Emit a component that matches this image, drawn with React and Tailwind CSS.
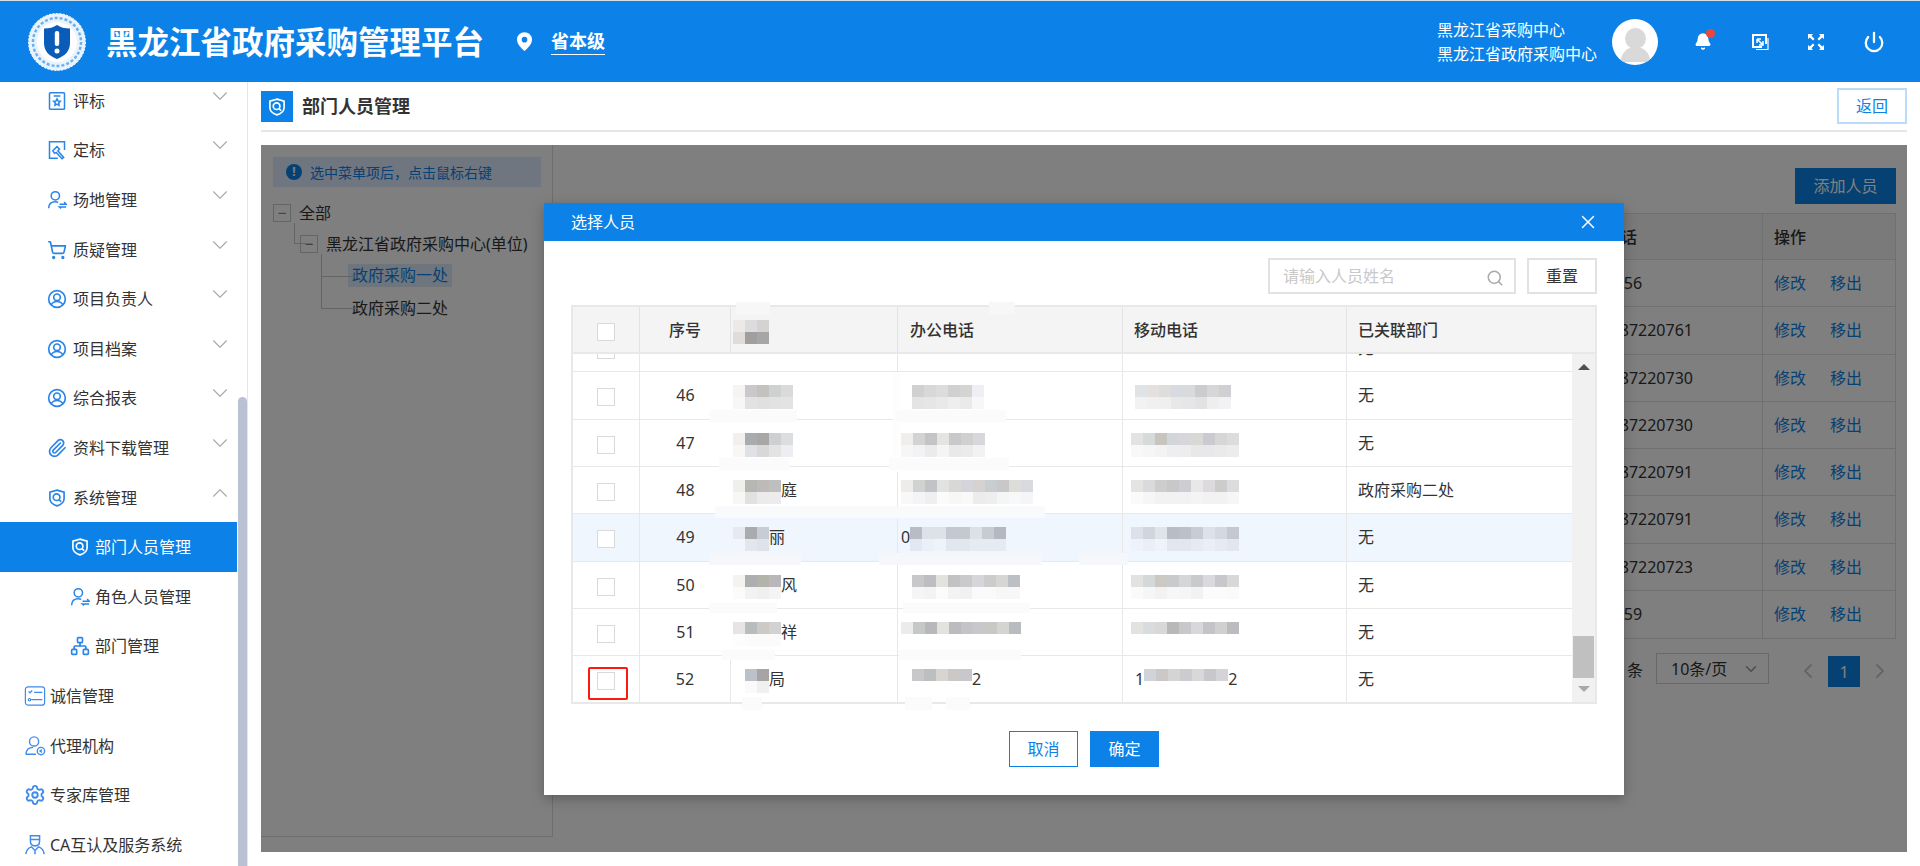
import {
  Bell,
  ChevronDown,
  ChevronLeft,
  ChevronRight,
  ChevronUp,
  Network,
  Paperclip,
  Power,
  Search,
  Settings,
  ShoppingCart,
  X,
} from "lucide-react";

const ShieldSearch = ({ className }) => (
  <svg viewBox="0 0 24 24" fill="none" stroke="currentColor" strokeWidth="2" className={className}>
    <path d="M12 2.500 20.500 5v8c0 4.200-3.600 7-8.500 8.500C7.100 20 3.500 17.200 3.500 13V5z" />
    <circle cx="11.500" cy="11" r="4" />
    <path d="m14.500 14 2.500 2.500" />
  </svg>
);

const UserSwap = ({ className }) => (
  <svg viewBox="0 0 24 24" fill="none" stroke="currentColor" strokeWidth="1.800" className={className}>
    <circle cx="10" cy="7" r="5" />
    <path d="M2 22c0-5 3-8 8-8 1.500 0 2.500.3 3.500.8" />
    <path d="M15 17h8l-2.500-2.500M23 20.500h-8l2 1.500" />
  </svg>
);

const UserCircle = ({ className }) => (
  <svg viewBox="0 0 24 24" fill="none" stroke="currentColor" strokeWidth="2" className={className}>
    <circle cx="12" cy="12" r="10" />
    <circle cx="12" cy="10" r="4" />
    <path d="M5 19c1.500-3 4-4 7-4s5.500 1 7 4" />
  </svg>
);

const StarDoc = ({ className }) => (
  <svg viewBox="0 0 24 24" fill="none" stroke="currentColor" strokeWidth="1.800" className={className}>
    <rect x="3" y="2" width="18" height="20" rx="1" />
    <path d="M8 6h8" />
    <path d="m12 9.500 1.300 2.600 2.700.3-2 2 .5 2.800-2.500-1.400-2.500 1.400.5-2.800-2-2 2.700-.3z" />
  </svg>
);

const PenDoc = ({ className }) => (
  <svg viewBox="0 0 24 24" fill="none" stroke="currentColor" strokeWidth="1.800" className={className}>
    <path d="M21 12V2H3v20h10" />
    <path d="m7 13 5-5 3 3-2 2 7 8-2 1.500-7-7.500-2 1z" />
  </svg>
);

const CheckList = ({ className }) => (
  <svg viewBox="0 0 24 24" fill="none" stroke="currentColor" strokeWidth="1.300" className={className}>
    <rect x="1.500" y="2" width="21" height="20" rx="3" />
    <path d="M5 7l1.500 1.500L9 6M11 8h9M8 16h12" />
    <circle cx="6" cy="16" r="1.300" />
  </svg>
);

const Agent = ({ className }) => (
  <svg viewBox="0 0 24 24" fill="none" stroke="currentColor" strokeWidth="1.500" className={className}>
    <circle cx="11" cy="7" r="5" />
    <path d="M2 21c.5-5 3.500-7.500 8-7.500M2 21h11" />
    <circle cx="18.500" cy="17.500" r="4" />
    <path d="m19.500 16-2 1.500 2 1.500" />
  </svg>
);

const Officer = ({ className }) => (
  <svg viewBox="0 0 24 24" fill="none" stroke="currentColor" strokeWidth="1.600" className={className}>
    <path d="M7 2h10v6c0 3-2 5-5 5s-5-2-5-5zM7 6h10" />
    <path d="M2 22c.5-5 3-7 6-8l4 4 4-4c3 1 5.500 3 6 8M12 18v4" />
  </svg>
);

const Logo = () => (
  <svg viewBox="0 0 60 60" className="w-[60px] h-[60px]">
    <circle cx="30" cy="30" r="28.500" fill="#e9f3fd" stroke="#fff" strokeWidth="1" strokeDasharray="2 1.500" />
    <circle cx="30" cy="30" r="24" fill="none" stroke="#6cb1ef" strokeWidth="2.500" strokeDasharray="3 2" />
    <circle cx="30" cy="30" r="20" fill="#fff" />
    <path d="M30 13c3.500 2.500 7.500 3.500 13 3.500V31c0 8-5 13-13 16-8-3-13-8-13-16V16.500c5.500 0 9.500-1 13-3.500z" fill="#0b5cb8" />
    <rect x="27.800" y="19" width="4.400" height="15" rx="2" fill="#fff" />
    <circle cx="30" cy="39" r="2.500" fill="#fff" />
  </svg>
);

const menu = [
  { label: "评标", icon: StarDoc, level: 2 },
  { label: "定标", icon: PenDoc, level: 2 },
  { label: "场地管理", icon: UserSwap, level: 2 },
  { label: "质疑管理", icon: ShoppingCart, level: 2 },
  { label: "项目负责人", icon: UserCircle, level: 2 },
  { label: "项目档案", icon: UserCircle, level: 2 },
  { label: "综合报表", icon: UserCircle, level: 2 },
  { label: "资料下载管理", icon: Paperclip, level: 2 },
  { label: "系统管理", icon: ShieldSearch, level: 2, open: true },
  { label: "部门人员管理", icon: ShieldSearch, level: 3, active: true },
  { label: "角色人员管理", icon: UserSwap, level: 3 },
  { label: "部门管理", icon: Network, level: 3 },
  { label: "诚信管理", icon: CheckList, level: 1 },
  { label: "代理机构", icon: Agent, level: 1 },
  { label: "专家库管理", icon: Settings, level: 1 },
  { label: "CA互认及服务系统", icon: Officer, level: 1 },
];

const MenuItem = ({ item }) => {
  const Icon = item.icon;
  const base = "h-[49.6px] flex items-center shrink-0";
  if (item.level === 1) {
    return (
      <div className={`${base} pl-[24px] text-[#333]`}>
        <Icon className="w-[22px] h-[22px] text-[#3f8bea] mr-[4px]" />
        <span>{item.label}</span>
      </div>
    );
  }
  if (item.level === 3) {
    return (
      <div className={`${base} pl-[70px] ${item.active ? "bg-[#0c82e8] text-white" : "text-[#333]"}`}>
        <Icon className={`w-[20px] h-[20px] mr-[5px] ${item.active ? "text-white" : "text-[#2a85e8]"}`} />
        <span>{item.label}</span>
      </div>
    );
  }
  const Arrow = item.open ? ChevronUp : ChevronDown;
  return (
    <div className={`${base} pl-[47px] pr-[4px] text-[#333]`}>
      <Icon className="w-[20px] h-[20px] text-[#2a85e8] mr-[6px]" />
      <span className="flex-1">{item.label}</span>
      <Arrow className="w-[26px] h-[26px] text-[#aaa] mb-[10px]" strokeWidth={1} />
    </div>
  );
};

const Sidebar = () => (
  <aside className="w-[248px] shrink-0 border-r border-[#e6e6e6] flex overflow-hidden">
    <div className="w-[237px] -mt-[6px] flex flex-col">
      {menu.map((item) => (
        <MenuItem key={item.label} item={item} />
      ))}
    </div>
    <div className="w-[9px] ml-[1px] mt-[315px] bg-[#b8c2d3] rounded-t-[5px]" />
  </aside>
);

// pixelated patches that hide the names and phone numbers
const Mosaic = ({ top, bottom, before, after, pl = 0 }) => (
  <div className="flex items-center h-full" style={{ paddingLeft: pl }}>
    {before && <span>{before}</span>}
    <div className="flex flex-col mt-[4px]">
      {[top, bottom].map((line, i) => (
        <div key={i} className="flex h-[12px]">
          {line.split(" ").map((c, j) => (
            <span key={j} className="w-[12px] h-[12px]" style={{ backgroundColor: `#${c}` }} />
          ))}
        </div>
      ))}
    </div>
    {after && <span>{after}</span>}
  </div>
);

const rows = [
  { n: 45, dept: "无" },
  {
    n: 46,
    dept: "无",
    name: { pl: 2, top: "f5f4f2 c9c8cb c4c2bf cfd0d2 dadadb", bottom: "f7f7f7 e2e2e2 e0e0e1 e2e2e2 e2e3e4" },
    office: { pl: 14, top: "d0d0d0 d8d8d8 dcdcdc d0d0d0 d4d4d2 eeeef4", bottom: "e4e4e4 e6e6e6 e9e9e9 eeeeee eaeaea f7f7f9" },
    mobile: { pl: 12, top: "e0e3e5 e4e0de dddddb d7dbdf d8dadb ccccce d6d6d6 cfcfd4", bottom: "f2f2f2 f0f0f0 efefef e8e8e8 e6e6e8 e2e2e4 eeeeee f2f2f4" },
  },
  {
    n: 47,
    dept: "无",
    name: { pl: 2, top: "f3efec a9acaf a8a7a5 cdd0d2 dcdddf", bottom: "f8f7f6 e0e1e4 d9d8d8 e3e3e4 eceef2" },
    office: { pl: 3, top: "f0eeec d2d3d2 c4c4c8 e6e4e0 c8c8cc d0d0d0 d8d8dc", bottom: "f6f6f6 f2f2f4 ebebeb f5f5f5 e9e9ea ebebeb f2f2f4" },
    mobile: { pl: 8, top: "e3e3e3 d7dadb c8c5c1 d2d6d8 d8d6da d8d8d4 cacad0 d6d6d6 dcdcdc", bottom: "f8f8f8 f6f6f6 f3f3f3 eeeef0 ecedee e8e8e8 e8e8ea eaeaea ececec" },
  },
  {
    n: 48,
    dept: "政府采购二处",
    name: { pl: 2, top: "efefec b5b7b4 bdbab7 bec0c0", bottom: "f7f7f6 e1e1e1 ebebeb ececec", after: "庭" },
    office: { pl: 3, top: "eeecea d0d2d0 c2c3c7 e2e2e0 d8d8d6 d4d4da d6d2d0 c8ced0 c8c8c8 dcdcd8 d8dae0", bottom: "f8f8f8 f4f4f6 efefef fbfbfb f7f7f5 f9f9f9 ececec eeeeee f4f5f5 f8f8f8 f5f5f8" },
    mobile: { pl: 8, top: "e4e4e2 d8dadb cdcdcd c8c8c8 ccced4 e8e8e8 dcdadc ccccca dadcde", bottom: "fafafa f6f6f6 f2f2f2 f2f2f2 f2f2f4 f4f4f4 f2f2f2 f2f2f2 f6f6f6" },
  },
  {
    n: 49,
    dept: "无",
    hover: true,
    name: { pl: 2, top: "e6e9f0 a9abae c8ccd4", bottom: "f2f5fb e2e6ee dfe2ea", after: "丽" },
    office: { pl: 3, before: "0", top: "b8bcc4 dde1e8 dde1e8 c4c8d0 c4c8d0 dde0e6 c8ccd2 b4b8c0", bottom: "e2e8f2 eaeff8 eef2fa e2e6ee e2e6ee e6eaf2 e6eaf2 e6eaf2" },
    mobile: { pl: 8, top: "dde1ea d0d5de dfe3ea b8bcc4 bcc0c8 c8ccd4 dde1ea d4d8e0 c4c8d0", bottom: "eef2fa eaeef6 eef2fa e2e6ee e2e6ee e6eaf2 eaeef6 e6eaf2 e2e6ee" },
  },
  {
    n: 50,
    dept: "无",
    name: { pl: 2, top: "f5f3f0 acaeb0 b2b3aa bab6ba", bottom: "fbfbfb f2f2f2 efefee f4f4f4", after: "风" },
    office: { pl: 14, top: "c8c8ca bcbec2 e2e2de c2c2c4 cacacc d6d6da cccccc d6d6d4 bcc0c4", bottom: "f5f5f5 f3f3f3 fbfbfb f3f3f3 f1f1f1 fafafa fafafa f7f7f7 f7f7f7" },
    mobile: { pl: 8, top: "e2e2e0 d4d8d8 ccc8c4 c8cacc d4d6d8 c8cacc dadade c8c8cc d8d8d8", bottom: "fafafa f6f6f6 f2f2f2 f7f7f7 f6f6f6 f2f2f2 fbfbfb fbfbfb fafafa" },
  },
  {
    n: 51,
    dept: "无",
    name: { pl: 2, top: "e6e4e4 b8bcbc ccc9c6 d2d2d2", bottom: "fdfdfd fbfbfb fbfbfb fbfbfb", after: "祥" },
    office: { pl: 3, top: "ebebeb c6c8c8 b6b8ba e2e2de bcbcbe c4c4c6 c8c8cc c8c8c4 d4d4d0 b8bcc0", bottom: "ffffff ffffff ffffff ffffff ffffff ffffff ffffff ffffff ffffff ffffff" },
    mobile: { pl: 8, top: "e2e2de d8dcdc d8d8d8 b8b8b8 c8c8cc d8d8dc c4c4c8 d0d0d0 bcbcc0", bottom: "ffffff ffffff ffffff ffffff ffffff ffffff ffffff ffffff ffffff" },
  },
  {
    n: 52,
    dept: "无",
    border: true,
    name: { pl: 14, top: "bcc0c8 a6a4a4", bottom: "fafafa f0f0f0", after: "局" },
    office: { pl: 14, top: "c8c8ca bcbec0 d8d4d0 ccc8c8 c8c8cc", bottom: "ffffff ffffff ffffff ffffff ffffff", after: "2" },
    mobile: { pl: 12, before: "1", top: "d0d4d8 ccc8c8 d4d4d4 ccccd0 d8d8d8 c8c8cc d4d4d8", bottom: "ffffff ffffff ffffff ffffff ffffff ffffff ffffff", after: "2" },
  },
];

// faint white smears left by the redaction, they break the grid lines
const smears = [
  "left-[192px] top-[99px] w-[34px] h-[12px] bg-[#f7f7f7]",
  "left-[445px] top-[99px] w-[26px] h-[12px] bg-[#f7f7f7]",
  "left-[349px] top-[169px] w-[7px] h-[100px] bg-[#fdfdfd]",
  "left-[166px] top-[207px] w-[87px] h-[12px] bg-[#fbfbfb]",
  "left-[352px] top-[207px] w-[110px] h-[12px] bg-[#fbfbfb]",
  "left-[175px] top-[255px] w-[71px] h-[12px] bg-[#fbfbfb]",
  "left-[345px] top-[255px] w-[120px] h-[12px] bg-[#fbfbfb]",
  "left-[171px] top-[303px] w-[330px] h-[12px] bg-[#f9fafc]",
  "left-[165px] top-[350px] w-[92px] h-[12px] bg-[#f6f7fb]",
  "left-[335px] top-[350px] w-[163px] h-[12px] bg-[#f6f7fb]",
  "left-[535px] top-[350px] w-[49px] h-[12px] bg-[#f6f7fb]",
  "left-[165px] top-[400px] w-[68px] h-[10px] bg-[#fbfbfb]",
  "left-[359px] top-[400px] w-[127px] h-[10px] bg-[#fbfbfb]",
  "left-[178px] top-[447px] w-[53px] h-[10px] bg-[#fbfbfb]",
  "left-[355px] top-[447px] w-[122px] h-[10px] bg-[#fbfbfb]",
  "left-[198px] top-[494px] w-[20px] h-[13px] bg-[#fbfbfb]",
  "left-[361px] top-[494px] w-[27px] h-[13px] bg-[#fbfbfb]",
  "left-[402px] top-[494px] w-[24px] h-[13px] bg-[#fbfbfb]",
];

const Checkbox = () => (
  <span className="block w-[18px] h-[18px] mt-[4px] border border-[#d9d9d9] bg-white" />
);

const PersonRow = ({ row }) => (
  <div
    className={`grid grid-cols-[67px_91px_167px_225px_224px_1fr] h-[47.330px] shrink-0 border-b border-[#e8e8e8] ${row.hover ? "bg-[#f0f6fe]" : ""}`}
  >
    <div className="relative flex items-center justify-center border-r border-[#e8e8e8]">
      <Checkbox />
      {row.n === 52 && (
        <span className="absolute left-[15px] top-[11px] w-[40px] h-[33px] border-2 border-[#ff1a0f] rounded-[2px]" />
      )}
    </div>
    <div className={`flex items-center justify-center ${row.border ? "border-r border-[#e8e8e8]" : ""}`}>{row.n}</div>
    <div className="border-r border-[#e8e8e8]">{row.name && <Mosaic {...row.name} />}</div>
    <div className="border-r border-[#e8e8e8]">{row.office && <Mosaic {...row.office} />}</div>
    <div className="border-r border-[#e8e8e8]">{row.mobile && <Mosaic {...row.mobile} />}</div>
    <div className="flex items-center pl-[11px] whitespace-nowrap">{row.dept}</div>
  </div>
);

const PickerDialog = () => (
  <div className="absolute left-[283px] top-[58px] w-[1080px] h-[592px] bg-white shadow-[0_4px_12px_rgba(0,0,0,0.25)] text-[#333]">
    <div className="h-[38px] bg-[#0c82e8] text-white flex items-center justify-between pl-[27px] pr-[25px]">
      <span>选择人员</span>
      <X className="w-[22px] h-[22px]" strokeWidth={1.600} />
    </div>
    <div className="px-[27px] pt-[17px]">
      <div className="flex justify-end gap-[11px]">
        <div className="w-[248px] h-[36px] border-2 border-[#e2e2e2] flex items-center justify-between pl-[13px] pr-[10px] text-[#c8c8c8]">
          <span>请输入人员姓名</span>
          <Search className="w-[18px] h-[18px] text-[#a9a9a9] mt-[3px]" />
        </div>
        <button className="w-[70px] h-[36px] border-2 border-[#e2e2e2] text-[#333]">重置</button>
      </div>
      <div className="mt-[11px] border-2 border-[#e8e8e8] border-b-0">
        <div className="grid grid-cols-[67px_91px_167px_225px_224px_1fr] h-[47px] bg-[#f4f4f4] font-medium border-b-2 border-[#e8e8e8]">
          <div className="flex items-center justify-center border-r border-[#e3e3e3]">
            <Checkbox />
          </div>
          <div className="flex items-center justify-center border-r border-[#e3e3e3]">序号</div>
          <div className="border-r border-[#e3e3e3]">
            <Mosaic pl={2} top="ece9e6 dcdcde d5d3d2" bottom="e0dcd9 9f9f9f a8a6a4" />
          </div>
          <div className="flex items-center pl-[12px] border-r border-[#e3e3e3]">办公电话</div>
          <div className="flex items-center pl-[11px] border-r border-[#e3e3e3]">移动电话</div>
          <div className="flex items-center pl-[11px]">已关联部门</div>
        </div>
        <div className="flex h-[350px] overflow-hidden border-b-2 border-[#e8e8e8]">
          <div className="w-[999px] h-[350px] overflow-hidden">
            <div className="-mt-[29px]">
              {rows.map((row) => (
                <PersonRow key={row.n} row={row} />
              ))}
            </div>
          </div>
          <div className="flex-1 bg-[#f1f1f1] flex flex-col items-center pb-[10px] pt-[10px]">
            <span className="w-0 h-0 border-x-[6px] border-x-transparent border-b-[6px] border-b-[#505050]" />
            <div className="flex-1" />
            <div className="w-[21px] h-[42px] bg-[#c0c0c0]" />
            <span className="w-0 h-0 mt-[8px] border-x-[6px] border-x-transparent border-t-[6px] border-t-[#a8a8a8]" />
          </div>
        </div>
      </div>
      <div className="flex justify-center gap-[12px] mt-[27px]">
        <button className="w-[69px] h-[36px] border border-[#0c82e8] text-[#0c82e8]">取消</button>
        <button className="w-[69px] h-[36px] bg-[#0c82e8] text-white">确定</button>
      </div>
    </div>
    {smears.map((s) => (
      <span key={s} className={`absolute ${s}`} />
    ))}
  </div>
);

const staffRows = [
  "5120156",
  "0451-87220761",
  "0451-87220730",
  "0451-87220730",
  "0451-87220791",
  "0451-87220791",
  "0451-87220723",
  "5120159",
];

const TreeToggle = () => (
  <span className="w-[18px] h-[18px] border border-[#c8c8c8] flex items-center justify-center text-[#888] leading-none mr-[8px]">
    −
  </span>
);

const DepartmentTree = () => (
  <div className="w-[292px] h-[692px] shrink-0 border-r border-b border-[#dcdcdc] pl-[12px] pt-[12px] text-[#333]">
    <div className="w-[268px] h-[30px] bg-[#deecff] flex items-center pl-[13px] text-[14px] text-[#0c82e8]">
      <span className="w-[16px] h-[16px] rounded-full bg-[#0c82e8] text-white text-[12px] font-bold flex items-center justify-center mr-[8px]">
        !
      </span>
      选中菜单项后，点击鼠标右键
    </div>
    <div className="relative mt-[15px]">
      <span className="absolute left-[21px] top-[21px] w-[18px] h-[21px] border-l border-b border-[#c8c8c8]" />
      <span className="absolute left-[48px] top-[52px] w-[36px] h-[23px] border-l border-b border-[#c8c8c8]" />
      <span className="absolute left-[48px] top-[75px] w-[36px] h-[32px] border-l border-b border-[#c8c8c8]" />
      <div className="flex items-center h-[22px]">
        <TreeToggle />
        全部
      </div>
      <div className="flex items-center h-[22px] mt-[9px] pl-[27px]">
        <TreeToggle />
        黑龙江省政府采购中心(单位)
      </div>
      <div className="flex items-center h-[23px] mt-[9px] pl-[75px]">
        <span className="bg-[#ddebfa] text-[#0c82e8] px-[4px] leading-[23px]">政府采购一处</span>
      </div>
      <div className="flex items-center h-[23px] mt-[9px] pl-[79px]">政府采购二处</div>
    </div>
  </div>
);

const StaffTable = () => (
  <div className="flex-1 min-w-0 pt-[23px] pr-[11px] text-[#333]">
    <div className="flex justify-end">
      <button className="w-[101px] h-[36px] bg-[#0c82e8] text-white">添加人员</button>
    </div>
    <div className="mt-[9px] border border-[#e0e0e0]">
      <div className="flex h-[46px] bg-[#f5f5f5] font-medium border-b border-[#e0e0e0]">
        <div className="flex-1 flex items-center justify-end pr-[125px]">办公电话</div>
        <div className="w-[133px] flex items-center pl-[11px] border-l border-[#e0e0e0]">操作</div>
      </div>
      {staffRows.map((phone, i) => (
        <div key={i} className="flex h-[47.250px] border-b last:border-b-0 border-[#e0e0e0]">
          <div className="flex-1 flex items-center pl-[1024px]">{phone}</div>
          <div className="w-[133px] flex items-center gap-[24px] pl-[11px] border-l border-[#e0e0e0] text-[#0c82e8]">
            <span>修改</span>
            <span>移出</span>
          </div>
        </div>
      ))}
    </div>
    <div className="flex items-start justify-end mt-[14px] pr-[4px]">
      <span className="mt-[5px] mr-[13px]">条</span>
      <div className="w-[113px] h-[31px] border border-[#d0d0d0] flex items-center justify-between pl-[14px] pr-[8px]">
        <span>10条/页</span>
        <ChevronDown className="w-[18px] h-[18px] text-[#999]" />
      </div>
      <ChevronLeft className="w-[24px] h-[24px] text-[#c8c8c8] ml-[27px] mt-[6px]" strokeWidth={1.800} />
      <span className="w-[32px] h-[31px] bg-[#0c82e8] text-white flex items-center justify-center mx-[8px] mt-[3px]">1</span>
      <ChevronRight className="w-[24px] h-[24px] text-[#c8c8c8] mt-[6px]" strokeWidth={1.800} />
    </div>
  </div>
);

const Header = () => (
  <header className="h-[82px] shrink-0 bg-[#0c82e8] border-t border-[#d7dfe6] flex items-center text-white">
    <div className="ml-[27px]">
      <Logo />
    </div>
    <h1 className="ml-[19px] text-[31.500px] font-bold whitespace-nowrap">黑龙江省政府采购管理平台</h1>
    <svg viewBox="0 0 16 20" className="ml-[33px] w-[15px] h-[19px]">
      <path
        fillRule="evenodd"
        d="M8 0a8 8 0 0 1 8 8c0 4.500-4.500 9-8 12-3.500-3-8-7.500-8-12a8 8 0 0 1 8-8zm0 5a3 3 0 1 0 0 6 3 3 0 0 0 0-6z"
        fill="#fff"
      />
    </svg>
    <span className="ml-[19px] text-[18px] font-bold border-b border-white leading-[26px]">省本级</span>
    <div className="ml-auto text-[16px] leading-[24px] mr-[15px]">
      <p>黑龙江省采购中心</p>
      <p>黑龙江省政府采购中心</p>
    </div>
    <div className="w-[46px] h-[46px] rounded-full bg-white overflow-hidden flex flex-col items-center justify-end mr-[36px]">
      <span className="w-[21px] h-[21px] rounded-full bg-[#d9d9d9] mb-[-2px]" />
      <span className="w-[29px] h-[15px] rounded-t-[14px] bg-[#d9d9d9] mb-[3px]" />
    </div>
    <div className="relative mr-[39px]">
      <Bell className="w-[18px] h-[19px] fill-white" />
      <span className="absolute -top-[3px] -right-[3px] w-[9px] h-[9px] rounded-full bg-[#f0453a]" />
    </div>
    <svg viewBox="0 0 18 18" fill="none" stroke="white" strokeWidth="2" className="w-[18px] h-[18px] mr-[38px]">
      <path d="M15 11V2H2v12h9" />
      <path d="M6 6h4M6 6v4M6 6l6 6M12 8v4H8" strokeWidth="1.500" />
      <path d="M5 16.500h12V5" strokeWidth="1.200" />
    </svg>
    <svg viewBox="0 0 18 18" fill="white" className="w-[18px] h-[18px] mr-[38px]">
      <path d="M1 1h5L4.500 2.800 7.500 6 6 7.500 2.800 4.500 1 6zM17 1v5l-1.800-1.500L12 7.500 10.500 6l3-3.200L12 1zM1 17v-5l1.800 1.500L6 10.500 7.500 12l-3 3.200L6 17zM17 17h-5l1.500-1.800L10.500 12l1.500-1.500 3.200 3L17 12z" />
    </svg>
    <Power className="w-[22px] h-[22px] mr-[35px]" strokeWidth={2.500} />
  </header>
);

export default function App() {
  return (
    <div className="h-[866px] w-[1920px] overflow-hidden flex flex-col bg-white text-[16px] font-['Noto_Sans','Noto_Sans_CJK_SC',sans-serif]">
      <Header />
      <div className="flex-1 flex min-h-0">
        <Sidebar />
        <main className="flex-1 min-w-0 pl-[13px] pr-[13px]">
          <div className="flex items-start justify-between h-[50px] border-b-2 border-[#e6e6e6]">
            <div className="flex items-center gap-[9px] mt-[9px]">
              <span className="w-[32px] h-[31px] bg-[#0c82e8] flex items-center justify-center">
                <ShieldSearch className="w-[20px] h-[20px] text-white" />
              </span>
              <span className="text-[18px] font-bold text-[#333]">部门人员管理</span>
            </div>
            <button className="w-[70px] h-[36px] mt-[6px] border-2 border-[#b8dcfa] text-[#0c82e8]">返回</button>
          </div>
          <div className="relative h-[707px] mt-[13px] flex overflow-hidden">
            <DepartmentTree />
            <StaffTable />
            <div className="absolute inset-0 bg-black/50" />
            <PickerDialog />
          </div>
        </main>
      </div>
    </div>
  );
}
